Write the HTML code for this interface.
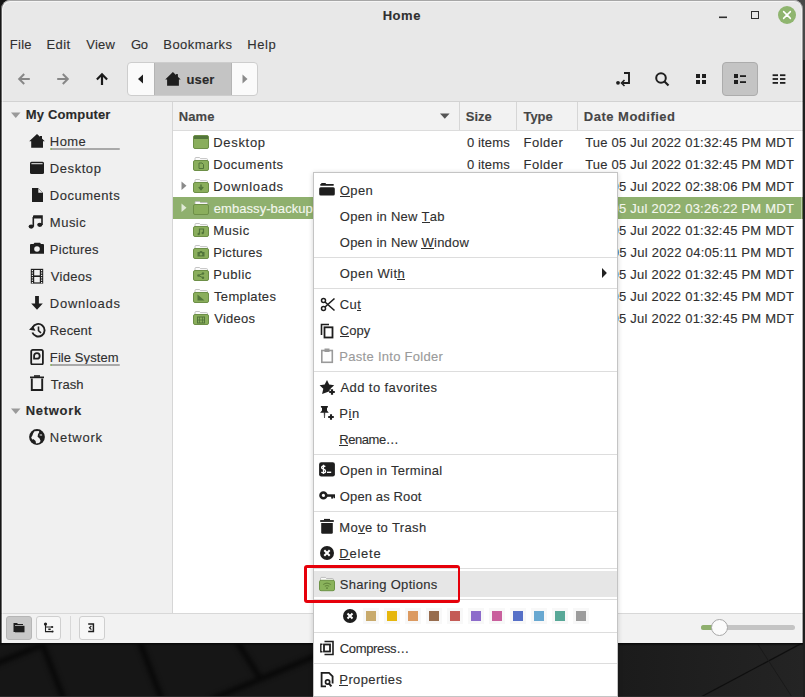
<!DOCTYPE html>
<html><head><meta charset="utf-8"><style>
html,body{margin:0;padding:0;width:805px;height:697px;overflow:hidden;background:#161616}
body{position:relative;font-family:"Liberation Sans", sans-serif}
.t{position:absolute;white-space:nowrap;font-family:"Liberation Sans", sans-serif;-webkit-text-stroke:0.12px currentColor}
u{text-decoration:none;border-bottom:1px solid currentColor;display:inline-block;line-height:10px}
svg{display:block}
</style></head><body>
<div style="position:absolute;left:0;top:0;width:805px;height:697px;background:#161616"></div>
<svg style="position:absolute;left:0px;top:0px;" width="805" height="697" viewBox="0 0 805 697">
<defs><filter id="bl" filterUnits="userSpaceOnUse" x="0" y="0" width="805" height="697" color-interpolation-filters="sRGB"><feGaussianBlur stdDeviation="2.2"/></filter></defs>
<g stroke="#090909" stroke-width="6" fill="none" filter="url(#bl)">
<line x1="-5" y1="664" x2="42" y2="645"/>
<line x1="42" y1="643" x2="64" y2="700"/>
<line x1="139" y1="640" x2="162" y2="700"/>
<line x1="236" y1="640" x2="260" y2="678"/>
<line x1="210" y1="700" x2="318" y2="655"/>
</g>
<rect x="600" y="640" width="205" height="57" fill="url(#rg)"/>
<defs><linearGradient id="rg" x1="0" x2="1" y1="0" y2="0"><stop offset="0" stop-color="#1a1a1a"/><stop offset="1" stop-color="#242424"/></linearGradient></defs>
<g stroke="#0f0f0f" stroke-width="1.3" fill="none">
<line x1="699" y1="698" x2="806" y2="641"/>
</g>
<g stroke="#1a1a1a" stroke-width="1" fill="none">
<line x1="757" y1="643" x2="792" y2="697"/>
</g>
</svg>
<div style="position:absolute;left:0px;top:696px;width:805px;height:1px;background:#2a2a2a"></div>
<div style="position:absolute;left:0px;top:643px;width:805px;height:3px;background:linear-gradient(#080808,rgba(8,8,8,0))"></div>
<div style="position:absolute;left:803px;top:0px;width:2px;height:697px;background:#1f1f1f"></div>
<div style="position:absolute;left:803px;top:0px;width:2px;height:60px;background:#484848"></div>
<div style="position:absolute;left:790px;top:0px;width:15px;height:14px;background:#484848"></div>
<div style="position:absolute;left:1px;top:0px;width:802px;height:643px;background:#e8e8e8;border-radius:9px 9px 0 0"></div>
<div class="t" style="left:382.65px;top:6px;font-size:13.0px;line-height:20px;color:#2f2f2f;font-weight:bold;letter-spacing:0.575px;">Home</div>
<svg style="position:absolute;left:718px;top:14px;" width="10" height="6" viewBox="0 0 10 6"><path d="M1 3.3 H9" stroke="#2f2f2f" stroke-width="1.6"/></svg>
<div style="position:absolute;left:751px;top:11px;width:8px;height:8px;border:1.6px solid #2f2f2f;box-sizing:border-box"></div>
<svg style="position:absolute;left:778px;top:6px;" width="18" height="18" viewBox="0 0 18 18"><circle cx="9" cy="9" r="9" fill="#8fb56f"/><path d="M5.6 5.6 L12.4 12.4 M12.4 5.6 L5.6 12.4" stroke="#fff" stroke-width="1.5" stroke-linecap="round"/></svg>
<div class="t" style="left:9.66px;top:35px;font-size:13.0px;line-height:20px;color:#303030;letter-spacing:0.332px;">File</div>
<div class="t" style="left:46.46px;top:35px;font-size:13.0px;line-height:20px;color:#303030;letter-spacing:0.415px;">Edit</div>
<div class="t" style="left:86.34px;top:35px;font-size:13.0px;line-height:20px;color:#303030;letter-spacing:0.172px;">View</div>
<div class="t" style="left:130.95px;top:35px;font-size:13.0px;line-height:20px;color:#303030;letter-spacing:-0.285px;">Go</div>
<div class="t" style="left:163.26px;top:35px;font-size:13.0px;line-height:20px;color:#303030;letter-spacing:0.462px;">Bookmarks</div>
<div class="t" style="left:247.36px;top:35px;font-size:13.0px;line-height:20px;color:#303030;letter-spacing:0.548px;">Help</div>
<svg style="position:absolute;left:17px;top:72px;" width="14" height="14" viewBox="0 0 14 14"><path d="M12.8 7 H2.4 M7.2 2 L2.2 7 L7.2 12" stroke="#878787" stroke-width="2" fill="none"/></svg>
<svg style="position:absolute;left:56px;top:72px;" width="14" height="14" viewBox="0 0 14 14"><path d="M1.2 7 H11.6 M6.8 2 L11.8 7 L6.8 12" stroke="#878787" stroke-width="2" fill="none"/></svg>
<svg style="position:absolute;left:95px;top:72px;" width="14" height="14" viewBox="0 0 14 14"><path d="M7 13 V2.4 M1.9 7.4 L7 2.2 L12.1 7.4" stroke="#1a1a1a" stroke-width="2.2" fill="none"/></svg>
<div style="position:absolute;left:127px;top:62px;width:131px;height:34px;background:#fafafa;border:1px solid #cdcdcd;border-radius:4px;box-sizing:border-box"></div>
<div style="position:absolute;left:154px;top:63px;width:78px;height:32px;background:#c4c4c4;border-left:1px solid #b4b4b4;border-right:1px solid #b4b4b4;box-sizing:border-box"></div>
<svg style="position:absolute;left:137px;top:74px;" width="8" height="10" viewBox="0 0 8 10"><path d="M6 0.5 V9.5 L1 5 Z" fill="#1e1e1e"/></svg>
<svg style="position:absolute;left:241px;top:74px;" width="8" height="10" viewBox="0 0 8 10"><path d="M1.5 0.5 V9.5 L6.5 5 Z" fill="#8a8a8a"/></svg>
<svg style="position:absolute;left:165px;top:71px;" width="16" height="16" viewBox="0 0 16 16"><path d="M7.9 1 L15.7 8.5 H13.9 V14.8 H2.1 V8.5 H0.2 Z" fill="#1e1e1e"/><rect x="11" y="3.1" width="1.9" height="4" fill="#1e1e1e"/></svg>
<div class="t" style="left:186.42px;top:70px;font-size:13.0px;line-height:20px;color:#2a2a2a;font-weight:bold;letter-spacing:0.160px;">user</div>
<svg style="position:absolute;left:614px;top:70px;" width="18" height="18" viewBox="0 0 18 18"><circle cx="4" cy="12.8" r="1.9" fill="#1e1e1e"/><path d="M10 3 H15 V13 H8.5" stroke="#1e1e1e" stroke-width="1.9" fill="none"/><path d="M10.5 10 L7.5 13 L10.5 16" stroke="#1e1e1e" stroke-width="1.6" fill="none"/></svg>
<svg style="position:absolute;left:654px;top:71px;" width="16" height="16" viewBox="0 0 16 16"><circle cx="7" cy="7" r="4.8" stroke="#1e1e1e" stroke-width="2" fill="none"/><path d="M10.5 10.5 L14.5 14.5" stroke="#1e1e1e" stroke-width="2.2"/></svg>
<svg style="position:absolute;left:696px;top:74px;" width="10" height="10" viewBox="0 0 10 10"><rect x="0" y="0" width="4" height="4" fill="#1e1e1e"/><rect x="6" y="0" width="4" height="4" fill="#1e1e1e"/><rect x="0" y="6" width="4" height="4" fill="#1e1e1e"/><rect x="6" y="6" width="4" height="4" fill="#1e1e1e"/></svg>
<div style="position:absolute;left:722px;top:62px;width:36px;height:34px;background:#c4c4c4;border:1px solid #acacac;border-radius:4px;box-sizing:border-box"></div>
<svg style="position:absolute;left:734px;top:74px;" width="12" height="10" viewBox="0 0 12 10"><rect x="0" y="0" width="4" height="4" fill="#1e1e1e"/><rect x="0" y="6" width="4" height="4" fill="#1e1e1e"/><rect x="6" y="1.2" width="6" height="1.8" fill="#1e1e1e"/><rect x="6" y="7.2" width="6" height="1.8" fill="#1e1e1e"/></svg>
<svg style="position:absolute;left:772px;top:74px;" width="14" height="10" viewBox="0 0 14 10"><rect x="0.6" y="0.3" width="5.4" height="1.8" fill="#1e1e1e"/><rect x="0.6" y="4.1" width="5.4" height="1.8" fill="#1e1e1e"/><rect x="0.6" y="8.0" width="5.4" height="1.8" fill="#1e1e1e"/><rect x="8" y="0.3" width="5.4" height="1.8" fill="#1e1e1e"/><rect x="8" y="4.1" width="5.4" height="1.8" fill="#1e1e1e"/><rect x="8" y="8.0" width="5.4" height="1.8" fill="#1e1e1e"/></svg>
<div style="position:absolute;left:1px;top:101px;width:802px;height:1px;background:#d2d2d2"></div>
<div style="position:absolute;left:1px;top:102px;width:171px;height:511px;background:#f0f0f0"></div>
<div style="position:absolute;left:172px;top:102px;width:1px;height:511px;background:#d6d6d6"></div>
<svg style="position:absolute;left:11px;top:112px;" width="10" height="7" viewBox="0 0 10 7"><path d="M0 0.5 H9.5 L4.75 6 Z" fill="#9a9a9a"/></svg>
<div class="t" style="left:25.86px;top:105px;font-size:13.0px;line-height:20px;color:#2a2a2a;font-weight:bold;letter-spacing:0.147px;">My Computer</div>
<svg style="position:absolute;left:11px;top:408px;" width="10" height="7" viewBox="0 0 10 7"><path d="M0 0.5 H9.5 L4.75 6 Z" fill="#9a9a9a"/></svg>
<div class="t" style="left:25.66px;top:401px;font-size:13.0px;line-height:20px;color:#2a2a2a;font-weight:bold;letter-spacing:0.710px;">Network</div>
<div class="t" style="left:49.86px;top:132px;font-size:13.0px;line-height:20px;color:#2f2f2f;letter-spacing:0.393px;">Home</div>
<div class="t" style="left:49.86px;top:159px;font-size:13.0px;line-height:20px;color:#2f2f2f;letter-spacing:0.552px;">Desktop</div>
<div class="t" style="left:49.86px;top:186px;font-size:13.0px;line-height:20px;color:#2f2f2f;letter-spacing:0.514px;">Documents</div>
<div class="t" style="left:49.86px;top:213px;font-size:13.0px;line-height:20px;color:#2f2f2f;letter-spacing:0.484px;">Music</div>
<div class="t" style="left:49.86px;top:240px;font-size:13.0px;line-height:20px;color:#2f2f2f;letter-spacing:0.238px;">Pictures</div>
<div class="t" style="left:50.84px;top:267px;font-size:13.0px;line-height:20px;color:#2f2f2f;letter-spacing:0.260px;">Videos</div>
<div class="t" style="left:49.86px;top:294px;font-size:13.0px;line-height:20px;color:#2f2f2f;letter-spacing:0.714px;">Downloads</div>
<div class="t" style="left:49.86px;top:321px;font-size:13.0px;line-height:20px;color:#2f2f2f;letter-spacing:0.092px;">Recent</div>
<div class="t" style="left:49.86px;top:348px;font-size:13.0px;line-height:20px;color:#2f2f2f;letter-spacing:0.086px;">File System</div>
<div class="t" style="left:50.64px;top:375px;font-size:13.0px;line-height:20px;color:#2f2f2f;letter-spacing:0.011px;">Trash</div>
<div class="t" style="left:49.86px;top:428px;font-size:13.0px;line-height:20px;color:#2f2f2f;letter-spacing:0.755px;">Network</div>
<div style="position:absolute;left:50px;top:148px;width:70px;height:2px;background:linear-gradient(90deg,#8fb06e 0,#8fb06e 1.5px,#a9a9a9 1.5px);border-radius:1px"></div>
<div style="position:absolute;left:50px;top:364px;width:70px;height:2px;background:linear-gradient(90deg,#8fb06e 0,#8fb06e 1.5px,#a9a9a9 1.5px);border-radius:1px"></div>
<svg style="position:absolute;left:29px;top:133px;" width="16" height="16" viewBox="0 0 16 16"><path d="M8 1 L15.8 8.3 H14 V14.8 H2.2 V8.3 H0.2 Z" fill="#1e1e1e"/><rect x="11" y="3" width="2" height="4" fill="#1e1e1e"/></svg>
<svg style="position:absolute;left:29px;top:161px;" width="16" height="14" viewBox="0 0 16 14"><rect x="1" y="0.8" width="14" height="12.2" rx="1.5" fill="#1e1e1e"/><rect x="2.4" y="2.2" width="11.2" height="1" fill="#f0f0f0"/></svg>
<svg style="position:absolute;left:29px;top:187px;" width="16" height="16" viewBox="0 0 16 16"><path d="M3 1 H9 L14 6 V15 H3 Z" fill="#1e1e1e"/><path d="M9.3 1.6 V5.7 H13.4 Z" fill="#f0f0f0"/></svg>
<svg style="position:absolute;left:28px;top:214px;" width="16" height="16" viewBox="0 0 16 16"><path d="M5.3 2 H14 V11" stroke="#1e1e1e" stroke-width="1.6" fill="none"/><rect x="5" y="2" width="9" height="2.5" fill="#1e1e1e"/><path d="M5.3 3 V12.5" stroke="#1e1e1e" stroke-width="1.6"/><ellipse cx="3.2" cy="12.6" rx="2.6" ry="2.1" fill="#1e1e1e"/><ellipse cx="11.8" cy="10.8" rx="2.6" ry="2.1" fill="#1e1e1e"/></svg>
<svg style="position:absolute;left:29px;top:241px;" width="16" height="15" viewBox="0 0 16 15"><path d="M1 4 Q1 3 2 3 H4.5 L5.5 1.8 H11 L12 3 H14 Q15 3 15 4 V12.8 H1 Z" fill="#1e1e1e"/><circle cx="8" cy="8" r="2.8" fill="#f0f0f0"/></svg>
<svg style="position:absolute;left:30px;top:268px;" width="14" height="16" viewBox="0 0 14 16"><rect x="0.8" y="0.8" width="12.4" height="14.8" fill="#1e1e1e"/><rect x="1.8" y="2.0" width="1.2" height="1.2" fill="#f0f0f0"/><rect x="11" y="2.0" width="1.2" height="1.2" fill="#f0f0f0"/><rect x="1.8" y="4.4" width="1.2" height="1.2" fill="#f0f0f0"/><rect x="11" y="4.4" width="1.2" height="1.2" fill="#f0f0f0"/><rect x="1.8" y="6.8" width="1.2" height="1.2" fill="#f0f0f0"/><rect x="11" y="6.8" width="1.2" height="1.2" fill="#f0f0f0"/><rect x="1.8" y="9.2" width="1.2" height="1.2" fill="#f0f0f0"/><rect x="11" y="9.2" width="1.2" height="1.2" fill="#f0f0f0"/><rect x="1.8" y="11.6" width="1.2" height="1.2" fill="#f0f0f0"/><rect x="11" y="11.6" width="1.2" height="1.2" fill="#f0f0f0"/><rect x="1.8" y="14.0" width="1.2" height="1.2" fill="#f0f0f0"/><rect x="11" y="14.0" width="1.2" height="1.2" fill="#f0f0f0"/><rect x="4.2" y="2" width="5.6" height="5.4" fill="#f0f0f0"/><rect x="4.2" y="9" width="5.6" height="5.4" fill="#f0f0f0"/></svg>
<svg style="position:absolute;left:29px;top:295px;" width="16" height="16" viewBox="0 0 16 16"><rect x="6.1" y="1" width="3.8" height="8" fill="#1e1e1e"/><path d="M2.2 8.5 H13.8 L8 14.8 Z" fill="#1e1e1e"/></svg>
<svg style="position:absolute;left:28px;top:322px;" width="18" height="16" viewBox="0 0 18 16"><path d="M4.6 5.5 A6.3 6.3 0 1 1 4.4 10.5" stroke="#1e1e1e" stroke-width="1.9" fill="none"/><path d="M1 7.8 L4.8 4 L7.6 8.8 Z" fill="#1e1e1e"/><path d="M10.5 4.5 V8.7 L13 11" stroke="#1e1e1e" stroke-width="1.6" fill="none"/></svg>
<svg style="position:absolute;left:29px;top:348px;" width="16" height="17" viewBox="0 0 16 17"><rect x="2.2" y="1.9" width="11.7" height="14.6" rx="1.6" stroke="#1e1e1e" stroke-width="1.8" fill="none"/><path d="M5.1 10.7 V7.8 A2.8 2.8 0 1 1 7.9 10.7 Z" stroke="#1e1e1e" stroke-width="1.8" fill="none"/></svg>
<svg style="position:absolute;left:29px;top:374px;" width="16" height="18" viewBox="0 0 16 18"><rect x="1" y="2.5" width="14" height="1.7" fill="#1e1e1e"/><rect x="5" y="1.2" width="6" height="1.6" fill="#1e1e1e"/><path d="M2.8 4.5 V16 H13.2 V4.5" stroke="#1e1e1e" stroke-width="1.9" fill="none"/></svg>
<svg style="position:absolute;left:29px;top:429px;" width="16" height="16" viewBox="0 0 16 16"><circle cx="8" cy="8" r="7.9" fill="#1e1e1e"/><path d="M5.5 2.3 L9.8 1.9 L10.3 3 L9 5.2 L8.6 7.8 L10.6 9.4 L11.6 12 L10.2 14 L7 14.4 L6.6 12 L4.6 10.3 L3.2 10.6 L2.2 8.6 L3.4 6.4 L4.2 4.2 Z M10.6 5.4 L13 5.5 L13.2 6.6 L10.8 6.6 Z" fill="#f0f0f0"/><path d="M4.6 10.3 L5.3 12.4 L3.8 12" fill="#1e1e1e"/></svg>
<div style="position:absolute;left:173px;top:102px;width:630px;height:28px;background:#f2f2f2"></div>
<div style="position:absolute;left:173px;top:130px;width:630px;height:1px;background:#dcdcdc"></div>
<div style="position:absolute;left:173px;top:131px;width:630px;height:482px;background:#ffffff"></div>
<div style="position:absolute;left:459px;top:102px;width:1px;height:28px;background:#d6d6d6"></div>
<div style="position:absolute;left:516px;top:102px;width:1px;height:28px;background:#d6d6d6"></div>
<div style="position:absolute;left:577px;top:102px;width:1px;height:28px;background:#d6d6d6"></div>
<div class="t" style="left:178.85px;top:107px;font-size:13.0px;line-height:20px;color:#464646;font-weight:bold;letter-spacing:0.058px;">Name</div>
<div class="t" style="left:465.81px;top:107px;font-size:13.0px;line-height:20px;color:#464646;font-weight:bold;letter-spacing:-0.018px;">Size</div>
<div class="t" style="left:523.47px;top:107px;font-size:13.0px;line-height:20px;color:#464646;font-weight:bold;letter-spacing:-0.065px;">Type</div>
<div class="t" style="left:583.86px;top:107px;font-size:13.0px;line-height:20px;color:#464646;font-weight:bold;letter-spacing:0.490px;">Date Modified</div>
<svg style="position:absolute;left:440px;top:113px;" width="10" height="6" viewBox="0 0 10 6"><path d="M0 0.5 H9.6 L4.8 5.8 Z" fill="#555"/></svg>
<div style="position:absolute;left:173px;top:197px;width:630px;height:22px;background:#8fb06e"></div>
<div class="t" style="left:213.26px;top:133px;font-size:13.0px;line-height:20px;color:#2f2f2f;letter-spacing:0.686px;">Desktop</div>
<div class="t" style="left:466.88px;top:133px;font-size:13.0px;line-height:20px;color:#2f2f2f;letter-spacing:0.158px;">0 items</div>
<div class="t" style="left:523.56px;top:133px;font-size:13.0px;line-height:20px;color:#2f2f2f;letter-spacing:0.489px;">Folder</div>
<div class="t" style="left:585.14px;top:133px;font-size:13.0px;line-height:20px;color:#2f2f2f;letter-spacing:0.230px;">Tue 05 Jul 2022 01:32:45 PM MDT</div>
<svg style="position:absolute;left:193px;top:135px;" width="16" height="14" viewBox="0 0 16 14"><rect x="0.5" y="0.5" width="15" height="13" rx="1.5" fill="#8aae5c" stroke="#6d8f47"/><rect x="1" y="1" width="14" height="3" fill="#52753a"/></svg>
<div class="t" style="left:213.26px;top:155px;font-size:13.0px;line-height:20px;color:#2f2f2f;letter-spacing:0.502px;">Documents</div>
<div class="t" style="left:466.88px;top:155px;font-size:13.0px;line-height:20px;color:#2f2f2f;letter-spacing:0.158px;">0 items</div>
<div class="t" style="left:523.56px;top:155px;font-size:13.0px;line-height:20px;color:#2f2f2f;letter-spacing:0.489px;">Folder</div>
<div class="t" style="left:585.14px;top:155px;font-size:13.0px;line-height:20px;color:#2f2f2f;letter-spacing:0.230px;">Tue 05 Jul 2022 01:32:45 PM MDT</div>
<svg style="position:absolute;left:193px;top:157px;" width="16" height="15" viewBox="0 0 16 15"><path d="M2 1.5 Q2 0.5 3 0.5 H6.5 L7.5 1.6 H13.5 Q14.5 1.6 14.5 2.6 V4 H2 Z" fill="#fbfbfb" stroke="#b5b5b5" stroke-width="0.8"/><rect x="0.5" y="3.5" width="15" height="10" rx="1.5" fill="#8aae5c" stroke="#6d8f47" stroke-width="1"/><path d="M6 6 H9 L10.5 7.5 V11.5 H6 Z" fill="none" stroke="#52753a" stroke-width="1"/></svg>
<div class="t" style="left:213.26px;top:177px;font-size:13.0px;line-height:20px;color:#2f2f2f;letter-spacing:0.689px;">Downloads</div>
<div class="t" style="left:466.88px;top:177px;font-size:13.0px;line-height:20px;color:#2f2f2f;letter-spacing:0.158px;">0 items</div>
<div class="t" style="left:523.56px;top:177px;font-size:13.0px;line-height:20px;color:#2f2f2f;letter-spacing:0.489px;">Folder</div>
<div class="t" style="left:585.14px;top:177px;font-size:13.0px;line-height:20px;color:#2f2f2f;letter-spacing:0.230px;">Tue 05 Jul 2022 02:38:06 PM MDT</div>
<svg style="position:absolute;left:181px;top:181px;" width="6" height="10" viewBox="0 0 6 10"><path d="M0.5 0.5 V9 L5.5 4.75 Z" fill="#8a8a8a"/></svg>
<svg style="position:absolute;left:193px;top:179px;" width="16" height="15" viewBox="0 0 16 15"><path d="M2 1.5 Q2 0.5 3 0.5 H6.5 L7.5 1.6 H13.5 Q14.5 1.6 14.5 2.6 V4 H2 Z" fill="#fbfbfb" stroke="#b5b5b5" stroke-width="0.8"/><rect x="0.5" y="3.5" width="15" height="10" rx="1.5" fill="#8aae5c" stroke="#6d8f47" stroke-width="1"/><path d="M8 5.5 V10 M5.8 8 L8 10.5 L10.2 8" stroke="#52753a" stroke-width="1.5" fill="none"/></svg>
<div class="t" style="left:213.78px;top:199px;font-size:13.0px;line-height:20px;color:#f4f7ef;letter-spacing:0.058px;">embassy-backup</div>
<div class="t" style="left:466.88px;top:199px;font-size:13.0px;line-height:20px;color:#f4f7ef;letter-spacing:0.158px;">0 items</div>
<div class="t" style="left:523.56px;top:199px;font-size:13.0px;line-height:20px;color:#f4f7ef;letter-spacing:0.489px;">Folder</div>
<div class="t" style="left:585.14px;top:199px;font-size:13.0px;line-height:20px;color:#f4f7ef;letter-spacing:0.230px;">Tue 05 Jul 2022 03:26:22 PM MDT</div>
<svg style="position:absolute;left:181px;top:203px;" width="6" height="10" viewBox="0 0 6 10"><path d="M0.5 0.5 V9 L5.5 4.75 Z" fill="#e0ead6"/></svg>
<svg style="position:absolute;left:193px;top:201px;" width="16" height="15" viewBox="0 0 16 15"><path d="M2 1.5 Q2 0.5 3 0.5 H6.5 L7.5 1.6 H13.5 Q14.5 1.6 14.5 2.6 V4 H2 Z" fill="#fbfbfb" stroke="#b5b5b5" stroke-width="0.8"/><rect x="0.5" y="3.5" width="15" height="10" rx="1.5" fill="#8aae5c" stroke="#6d8f47" stroke-width="1"/></svg>
<div class="t" style="left:213.26px;top:221px;font-size:13.0px;line-height:20px;color:#2f2f2f;letter-spacing:0.484px;">Music</div>
<div class="t" style="left:466.88px;top:221px;font-size:13.0px;line-height:20px;color:#2f2f2f;letter-spacing:0.158px;">0 items</div>
<div class="t" style="left:523.56px;top:221px;font-size:13.0px;line-height:20px;color:#2f2f2f;letter-spacing:0.489px;">Folder</div>
<div class="t" style="left:585.14px;top:221px;font-size:13.0px;line-height:20px;color:#2f2f2f;letter-spacing:0.230px;">Tue 05 Jul 2022 01:32:45 PM MDT</div>
<svg style="position:absolute;left:193px;top:223px;" width="16" height="15" viewBox="0 0 16 15"><path d="M2 1.5 Q2 0.5 3 0.5 H6.5 L7.5 1.6 H13.5 Q14.5 1.6 14.5 2.6 V4 H2 Z" fill="#fbfbfb" stroke="#b5b5b5" stroke-width="0.8"/><rect x="0.5" y="3.5" width="15" height="10" rx="1.5" fill="#8aae5c" stroke="#6d8f47" stroke-width="1"/><path d="M6.5 11 V6 H10.5 V10" stroke="#52753a" stroke-width="1.2" fill="none"/><circle cx="5.7" cy="11" r="1.2" fill="#52753a"/><circle cx="9.7" cy="10" r="1.2" fill="#52753a"/></svg>
<div class="t" style="left:213.26px;top:243px;font-size:13.0px;line-height:20px;color:#2f2f2f;letter-spacing:0.281px;">Pictures</div>
<div class="t" style="left:466.88px;top:243px;font-size:13.0px;line-height:20px;color:#2f2f2f;letter-spacing:0.158px;">0 items</div>
<div class="t" style="left:523.56px;top:243px;font-size:13.0px;line-height:20px;color:#2f2f2f;letter-spacing:0.489px;">Folder</div>
<div class="t" style="left:585.14px;top:243px;font-size:13.0px;line-height:20px;color:#2f2f2f;letter-spacing:0.262px;">Tue 05 Jul 2022 04:05:11 PM MDT</div>
<svg style="position:absolute;left:193px;top:245px;" width="16" height="15" viewBox="0 0 16 15"><path d="M2 1.5 Q2 0.5 3 0.5 H6.5 L7.5 1.6 H13.5 Q14.5 1.6 14.5 2.6 V4 H2 Z" fill="#fbfbfb" stroke="#b5b5b5" stroke-width="0.8"/><rect x="0.5" y="3.5" width="15" height="10" rx="1.5" fill="#8aae5c" stroke="#6d8f47" stroke-width="1"/><path d="M4.5 7 H6.5 L7 6 H9 L9.5 7 H11.5 V11.5 H4.5 Z" fill="#52753a"/><circle cx="8" cy="9.2" r="1.2" fill="#8aae5c"/></svg>
<div class="t" style="left:213.26px;top:265px;font-size:13.0px;line-height:20px;color:#2f2f2f;letter-spacing:0.528px;">Public</div>
<div class="t" style="left:466.88px;top:265px;font-size:13.0px;line-height:20px;color:#2f2f2f;letter-spacing:0.158px;">0 items</div>
<div class="t" style="left:523.56px;top:265px;font-size:13.0px;line-height:20px;color:#2f2f2f;letter-spacing:0.489px;">Folder</div>
<div class="t" style="left:585.14px;top:265px;font-size:13.0px;line-height:20px;color:#2f2f2f;letter-spacing:0.230px;">Tue 05 Jul 2022 01:32:45 PM MDT</div>
<svg style="position:absolute;left:193px;top:267px;" width="16" height="15" viewBox="0 0 16 15"><path d="M2 1.5 Q2 0.5 3 0.5 H6.5 L7.5 1.6 H13.5 Q14.5 1.6 14.5 2.6 V4 H2 Z" fill="#fbfbfb" stroke="#b5b5b5" stroke-width="0.8"/><rect x="0.5" y="3.5" width="15" height="10" rx="1.5" fill="#8aae5c" stroke="#6d8f47" stroke-width="1"/><circle cx="5.5" cy="8.5" r="1.3" fill="#52753a"/><circle cx="10" cy="6.5" r="1.2" fill="#52753a"/><circle cx="10" cy="10.8" r="1.2" fill="#52753a"/><path d="M5.5 8.5 L10 6.5 M5.5 8.5 L10 10.8" stroke="#52753a" stroke-width="1"/></svg>
<div class="t" style="left:214.04px;top:287px;font-size:13.0px;line-height:20px;color:#2f2f2f;letter-spacing:0.329px;">Templates</div>
<div class="t" style="left:466.88px;top:287px;font-size:13.0px;line-height:20px;color:#2f2f2f;letter-spacing:0.158px;">0 items</div>
<div class="t" style="left:523.56px;top:287px;font-size:13.0px;line-height:20px;color:#2f2f2f;letter-spacing:0.489px;">Folder</div>
<div class="t" style="left:585.14px;top:287px;font-size:13.0px;line-height:20px;color:#2f2f2f;letter-spacing:0.230px;">Tue 05 Jul 2022 01:32:45 PM MDT</div>
<svg style="position:absolute;left:193px;top:289px;" width="16" height="15" viewBox="0 0 16 15"><path d="M2 1.5 Q2 0.5 3 0.5 H6.5 L7.5 1.6 H13.5 Q14.5 1.6 14.5 2.6 V4 H2 Z" fill="#fbfbfb" stroke="#b5b5b5" stroke-width="0.8"/><rect x="0.5" y="3.5" width="15" height="10" rx="1.5" fill="#8aae5c" stroke="#6d8f47" stroke-width="1"/><path d="M4.5 5.5 L11.5 11.5 H4.5 Z" fill="#52753a"/></svg>
<div class="t" style="left:214.24px;top:309px;font-size:13.0px;line-height:20px;color:#2f2f2f;letter-spacing:0.240px;">Videos</div>
<div class="t" style="left:466.88px;top:309px;font-size:13.0px;line-height:20px;color:#2f2f2f;letter-spacing:0.158px;">0 items</div>
<div class="t" style="left:523.56px;top:309px;font-size:13.0px;line-height:20px;color:#2f2f2f;letter-spacing:0.489px;">Folder</div>
<div class="t" style="left:585.14px;top:309px;font-size:13.0px;line-height:20px;color:#2f2f2f;letter-spacing:0.230px;">Tue 05 Jul 2022 01:32:45 PM MDT</div>
<svg style="position:absolute;left:193px;top:311px;" width="16" height="15" viewBox="0 0 16 15"><path d="M2 1.5 Q2 0.5 3 0.5 H6.5 L7.5 1.6 H13.5 Q14.5 1.6 14.5 2.6 V4 H2 Z" fill="#fbfbfb" stroke="#b5b5b5" stroke-width="0.8"/><rect x="0.5" y="3.5" width="15" height="10" rx="1.5" fill="#8aae5c" stroke="#6d8f47" stroke-width="1"/><rect x="4.5" y="6" width="7" height="6" fill="none" stroke="#52753a" stroke-width="1"/><path d="M6.5 6 V12 M9.5 6 V12 M4.5 9 H11.5" stroke="#52753a" stroke-width="0.8"/></svg>
<div style="position:absolute;left:1px;top:613px;width:802px;height:1px;background:#d8d8d8"></div>
<div style="position:absolute;left:1px;top:614px;width:802px;height:29px;background:#f2f2f2"></div>
<div style="position:absolute;left:6px;top:616px;width:26px;height:24px;background:#c8c8c8;border:1px solid #b6b6b6;border-radius:3px;box-sizing:border-box"></div>
<div style="position:absolute;left:36px;top:616px;width:25px;height:24px;background:#f7f7f7;border:1px solid #cfcfcf;border-radius:3px;box-sizing:border-box"></div>
<div style="position:absolute;left:70px;top:616px;width:1px;height:24px;background:#d8d8d8"></div>
<div style="position:absolute;left:79px;top:616px;width:26px;height:24px;background:#f7f7f7;border:1px solid #cfcfcf;border-radius:3px;box-sizing:border-box"></div>
<svg style="position:absolute;left:13px;top:622px;" width="12" height="11" viewBox="0 0 12 11"><path d="M0.5 1 H4 L5 2 H10 V3 H2 V10 H0.5 Z" fill="#1e1e1e"/><rect x="2" y="3.8" width="9.5" height="6.5" fill="#1e1e1e"/></svg>
<svg style="position:absolute;left:43px;top:622px;" width="12" height="12" viewBox="0 0 12 12"><circle cx="2.5" cy="2.1" r="1.6" fill="#1e1e1e"/><path d="M2.5 2 V9.6 H9.5 M2.5 5 H9" stroke="#1e1e1e" stroke-width="1.1" fill="none"/><circle cx="9.2" cy="5" r="1.1" fill="#1e1e1e"/><circle cx="9.5" cy="9.5" r="1.1" fill="#1e1e1e"/><rect x="5.3" y="6.5" width="2.4" height="1.6" fill="#1e1e1e"/></svg>
<svg style="position:absolute;left:87px;top:622px;" width="8" height="11" viewBox="0 0 8 11"><path d="M1.2 1.9 H6.4 V9.6 H1.2" stroke="#1e1e1e" stroke-width="1.5" fill="none"/><path d="M4.4 3.9 L2.5 5.75 L4.4 7.6" stroke="#1e1e1e" stroke-width="1.2" fill="none"/></svg>
<div style="position:absolute;left:701px;top:625px;width:94px;height:5px;background:#c4c4c4;border-radius:3px"></div>
<div style="position:absolute;left:701px;top:625px;width:18px;height:5px;background:#8fb06e;border-radius:3px 0 0 3px"></div>
<div style="position:absolute;left:711px;top:619px;width:17px;height:17px;background:#fbfbfb;border:1px solid #a8a8a8;border-radius:50%;box-sizing:border-box"></div>
<div style="position:absolute;left:1px;top:0px;width:802px;height:643px;border:1px solid rgba(0,0,0,0.55);border-right-color:rgba(0,0,0,0.32);border-top-color:#a6a6a6;border-bottom:none;border-radius:9px 9px 0 0;box-sizing:border-box;box-shadow:inset 1px 1px 0 rgba(255,255,255,0.55), inset -1px 0 0 rgba(255,255,255,0.4)"></div>
<div style="position:absolute;left:313px;top:172px;width:305px;height:525px;background:#fff;border:1px solid #c4c4c4;box-sizing:border-box;box-shadow:0 1px 5px rgba(0,0,0,0.18)"></div>
<div style="position:absolute;left:314px;top:571px;width:303px;height:26px;background:#e6e6e6"></div>
<div class="t" style="left:339.81px;top:181px;font-size:13.0px;line-height:20px;color:#2f2f2f;letter-spacing:0.382px;"><u>O</u>pen</div>
<div class="t" style="left:339.81px;top:207px;font-size:13.0px;line-height:20px;color:#2f2f2f;letter-spacing:0.247px;">Open in New <u>T</u>ab</div>
<div class="t" style="left:339.81px;top:233px;font-size:13.0px;line-height:20px;color:#2f2f2f;letter-spacing:0.243px;">Open in New <u>W</u>indow</div>
<div class="t" style="left:339.81px;top:264px;font-size:13.0px;line-height:20px;color:#2f2f2f;letter-spacing:0.438px;">Open Wit<u>h</u></div>
<div class="t" style="left:339.75px;top:295px;font-size:13.0px;line-height:20px;color:#2f2f2f;letter-spacing:0.400px;">Cu<u>t</u></div>
<div class="t" style="left:339.75px;top:321px;font-size:13.0px;line-height:20px;color:#2f2f2f;letter-spacing:0.065px;"><u>C</u>opy</div>
<div class="t" style="left:339.36px;top:347px;font-size:13.0px;line-height:20px;color:#9a9a9a;letter-spacing:0.282px;">Paste Into Folder</div>
<div class="t" style="left:340.40px;top:378px;font-size:13.0px;line-height:20px;color:#2f2f2f;letter-spacing:0.427px;">Add to favorites</div>
<div class="t" style="left:339.36px;top:404px;font-size:13.0px;line-height:20px;color:#2f2f2f;letter-spacing:0.500px;">P<u>i</u>n</div>
<div class="t" style="left:339.36px;top:430px;font-size:13.0px;line-height:20px;color:#2f2f2f;letter-spacing:-0.474px;"><u>R</u>ename…</div>
<div class="t" style="left:339.81px;top:461px;font-size:13.0px;line-height:20px;color:#2f2f2f;letter-spacing:0.281px;">Open in Terminal</div>
<div class="t" style="left:339.81px;top:487px;font-size:13.0px;line-height:20px;color:#2f2f2f;letter-spacing:0.122px;">Open as Root</div>
<div class="t" style="left:339.36px;top:518px;font-size:13.0px;line-height:20px;color:#2f2f2f;letter-spacing:0.369px;">Mo<u>v</u>e to Trash</div>
<div class="t" style="left:339.36px;top:544px;font-size:13.0px;line-height:20px;color:#2f2f2f;letter-spacing:0.751px;"><u>D</u>elete</div>
<div class="t" style="left:339.81px;top:575px;font-size:13.0px;line-height:20px;color:#2f2f2f;letter-spacing:0.309px;">Sharing Options</div>
<div class="t" style="left:339.75px;top:639px;font-size:13.0px;line-height:20px;color:#2f2f2f;letter-spacing:-0.351px;">Compress…</div>
<div class="t" style="left:339.36px;top:670px;font-size:13.0px;line-height:20px;color:#2f2f2f;letter-spacing:0.368px;"><u>P</u>roperties</div>
<div style="position:absolute;left:314px;top:257px;width:303px;height:1px;background:#dddddd"></div>
<div style="position:absolute;left:314px;top:288px;width:303px;height:1px;background:#dddddd"></div>
<div style="position:absolute;left:314px;top:371px;width:303px;height:1px;background:#dddddd"></div>
<div style="position:absolute;left:314px;top:454px;width:303px;height:1px;background:#dddddd"></div>
<div style="position:absolute;left:314px;top:511px;width:303px;height:1px;background:#dddddd"></div>
<div style="position:absolute;left:314px;top:568px;width:303px;height:1px;background:#dddddd"></div>
<div style="position:absolute;left:314px;top:599px;width:303px;height:1px;background:#dddddd"></div>
<div style="position:absolute;left:314px;top:632px;width:303px;height:1px;background:#dddddd"></div>
<div style="position:absolute;left:314px;top:663px;width:303px;height:1px;background:#dddddd"></div>
<svg style="position:absolute;left:601px;top:267px;" width="7" height="12" viewBox="0 0 7 12"><path d="M1 1 V10.9 L5.9 5.95 Z" fill="#222"/></svg>
<svg style="position:absolute;left:319px;top:182px;" width="16" height="15" viewBox="0 0 16 15"><path d="M2.6 1 H6.4 L7.2 2.1 H14.1 Q14.9 2.1 14.9 2.9 Q14.9 3.7 14.1 3.7 H1.9 Q1.1 3.7 1.1 2.9 Q1.1 2.1 1.9 2.1 Z" fill="#1e1e1e"/><rect x="0.2" y="5.2" width="15.6" height="8.4" rx="1.5" fill="#1e1e1e"/></svg>
<svg style="position:absolute;left:320px;top:297px;" width="16" height="15" viewBox="0 0 16 15"><circle cx="3.5" cy="11.5" r="2" stroke="#1e1e1e" stroke-width="1.5" fill="none"/><circle cx="3.5" cy="3.5" r="2" stroke="#1e1e1e" stroke-width="1.5" fill="none"/><path d="M5 10 L14.5 1.5 M5 5 L14.5 13.5" stroke="#1e1e1e" stroke-width="1.6"/></svg>
<svg style="position:absolute;left:319px;top:322px;" width="16" height="17" viewBox="0 0 16 17"><path d="M2.5 13 V2.5 H10" stroke="#1e1e1e" stroke-width="1.6" fill="none"/><rect x="5.5" y="5.3" width="8" height="10.2" stroke="#1e1e1e" stroke-width="1.8" fill="none"/></svg>
<svg style="position:absolute;left:319px;top:347px;" width="16" height="17" viewBox="0 0 16 17"><rect x="2.8" y="3.5" width="10.5" height="11.8" stroke="#9a9a9a" stroke-width="1.6" fill="none"/><rect x="5.5" y="1.5" width="5" height="3.5" fill="#9a9a9a"/></svg>
<svg style="position:absolute;left:319px;top:379px;" width="17" height="17" viewBox="0 0 17 17"><path d="M8 1.1 L10.2 5.6 L15.2 6.3 L11.6 9.6 L11.9 10.6 L10.6 10.6 L10.6 12.2 L3.1 15 L4.3 9.8 L0.6 6.3 L5.7 5.6 Z" fill="#1e1e1e"/><path d="M13 10.2 V15.8 M10.2 13 H15.8" stroke="#1e1e1e" stroke-width="2.2"/></svg>
<svg style="position:absolute;left:319px;top:405px;" width="16" height="16" viewBox="0 0 16 16"><path d="M1.9 0.9 H8.9 V2.2 L8 3 V5.5 L9.8 7.7 H1.1 L3 5.5 V3 L1.9 2.2 Z" fill="#1e1e1e"/><path d="M5.1 7.6 H5.9 L5.5 13 Z" fill="#1e1e1e" stroke="#1e1e1e" stroke-width="0.5"/><path d="M12 9.2 V14.8 M9.2 12 H14.8" stroke="#1e1e1e" stroke-width="2.1"/></svg>
<svg style="position:absolute;left:319px;top:462px;" width="16" height="15" viewBox="0 0 16 15"><rect x="0.1" y="0.2" width="15.8" height="14.3" rx="2.2" fill="#1e1e1e"/><path d="M6.3 4.7 Q5.8 4 4.5 4 Q2.6 4 2.6 5.6 Q2.6 6.8 4.5 7.2 Q6.6 7.6 6.6 9.2 Q6.6 10.8 4.5 10.8 Q3.1 10.8 2.4 10 M4.5 2.8 V12" stroke="#fff" stroke-width="1.3" fill="none"/><rect x="8" y="9.6" width="4.2" height="1.4" fill="#fff"/></svg>
<svg style="position:absolute;left:319px;top:491px;" width="17" height="9" viewBox="0 0 17 9"><circle cx="4.4" cy="4.4" r="2.9" stroke="#1e1e1e" stroke-width="2.6" fill="none"/><rect x="7" y="3.3" width="9" height="2.5" fill="#1e1e1e"/><rect x="12.2" y="5" width="1.8" height="2.6" fill="#1e1e1e"/><rect x="14.4" y="5" width="1.6" height="2.2" fill="#1e1e1e"/></svg>
<svg style="position:absolute;left:319px;top:517px;" width="16" height="18" viewBox="0 0 16 18"><rect x="1.2" y="3.1" width="13.6" height="1.8" fill="#1e1e1e"/><rect x="5" y="1.9" width="6" height="1.6" fill="#1e1e1e"/><path d="M2.2 5.9 H13.8 V15.6 Q13.8 16.8 12.6 16.8 H3.4 Q2.2 16.8 2.2 15.6 Z" fill="#1e1e1e"/></svg>
<svg style="position:absolute;left:319px;top:545px;" width="16" height="16" viewBox="0 0 16 16"><circle cx="8" cy="8" r="7" fill="#1e1e1e"/><path d="M5.3 5.3 L10.7 10.7 M10.7 5.3 L5.3 10.7" stroke="#fff" stroke-width="2"/></svg>
<svg style="position:absolute;left:319px;top:576px;" width="16" height="16" viewBox="0 0 16 16"><path d="M1.5 2.6 Q1.5 1.4 2.7 1.4 H6.4 L7.5 2.5 H13.3 Q14.5 2.5 14.5 3.7 V5 H1.5 Z" fill="#fafafa" stroke="#b0b0b0" stroke-width="0.8"/><rect x="0.5" y="4.3" width="15" height="10.4" rx="1.5" fill="#8ab35c" stroke="#6d9346"/><path d="M4.2 8.6 Q8 5.6 11.8 8.6 M5.8 10.4 Q8 8.6 10.2 10.4" stroke="#66883f" stroke-width="1.1" fill="none"/><path d="M7 12 Q8 11 9 12 L8 13 Z" fill="#66883f" stroke="#66883f" stroke-width="0.6"/></svg>
<svg style="position:absolute;left:319px;top:640px;" width="16" height="16" viewBox="0 0 16 16"><path d="M5.5 1.5 H14 V14.5 H5.5" stroke="#1e1e1e" stroke-width="1.6" fill="none"/><path d="M3.5 4.2 H1.8 V11.8 H3.5" stroke="#1e1e1e" stroke-width="1.4" fill="none"/><rect x="5" y="4.5" width="6" height="7" stroke="#1e1e1e" stroke-width="1.8" fill="none"/></svg>
<svg style="position:absolute;left:319px;top:671px;" width="16" height="17" viewBox="0 0 16 17"><path d="M7 15.3 H2.6 V1.9 H10 L13.6 5.4 V12.5" stroke="#1e1e1e" stroke-width="1.8" fill="none"/><circle cx="8.6" cy="11" r="2.1" stroke="#1e1e1e" stroke-width="1.7" fill="none"/><path d="M9.8 12.4 L12.4 15.4" stroke="#1e1e1e" stroke-width="2"/></svg>
<svg style="position:absolute;left:343px;top:609px;" width="14" height="14" viewBox="0 0 14 14"><circle cx="7" cy="7" r="7" fill="#1e1e1e"/><path d="M4.5 4.5 L9.5 9.5 M9.5 4.5 L4.5 9.5" stroke="#fff" stroke-width="2"/></svg>
<div style="position:absolute;left:363px;top:608px;width:16px;height:16px;background:#f8f8f8"></div>
<div style="position:absolute;left:366px;top:611px;width:10px;height:10px;background:#c8aa6c"></div>
<div style="position:absolute;left:384px;top:608px;width:16px;height:16px;background:#f8f8f8"></div>
<div style="position:absolute;left:387px;top:611px;width:10px;height:10px;background:#e6b70e"></div>
<div style="position:absolute;left:405px;top:608px;width:16px;height:16px;background:#f8f8f8"></div>
<div style="position:absolute;left:408px;top:611px;width:10px;height:10px;background:#dc9a61"></div>
<div style="position:absolute;left:426px;top:608px;width:16px;height:16px;background:#f8f8f8"></div>
<div style="position:absolute;left:429px;top:611px;width:10px;height:10px;background:#976d4f"></div>
<div style="position:absolute;left:447px;top:608px;width:16px;height:16px;background:#f8f8f8"></div>
<div style="position:absolute;left:450px;top:611px;width:10px;height:10px;background:#c45b56"></div>
<div style="position:absolute;left:468px;top:608px;width:16px;height:16px;background:#f8f8f8"></div>
<div style="position:absolute;left:471px;top:611px;width:10px;height:10px;background:#8d6ccb"></div>
<div style="position:absolute;left:489px;top:608px;width:16px;height:16px;background:#f8f8f8"></div>
<div style="position:absolute;left:492px;top:611px;width:10px;height:10px;background:#c9609d"></div>
<div style="position:absolute;left:510px;top:608px;width:16px;height:16px;background:#f8f8f8"></div>
<div style="position:absolute;left:513px;top:611px;width:10px;height:10px;background:#5670c7"></div>
<div style="position:absolute;left:531px;top:608px;width:16px;height:16px;background:#f8f8f8"></div>
<div style="position:absolute;left:534px;top:611px;width:10px;height:10px;background:#68a8d1"></div>
<div style="position:absolute;left:552px;top:608px;width:16px;height:16px;background:#f8f8f8"></div>
<div style="position:absolute;left:555px;top:611px;width:10px;height:10px;background:#58a897"></div>
<div style="position:absolute;left:573px;top:608px;width:16px;height:16px;background:#f8f8f8"></div>
<div style="position:absolute;left:576px;top:611px;width:10px;height:10px;background:#9c9c9c"></div>
<div style="position:absolute;left:304px;top:565px;width:156px;height:38px;border:3px solid #e6000a;border-right-width:2.6px;border-radius:3px;box-sizing:border-box"></div>
</body></html>
